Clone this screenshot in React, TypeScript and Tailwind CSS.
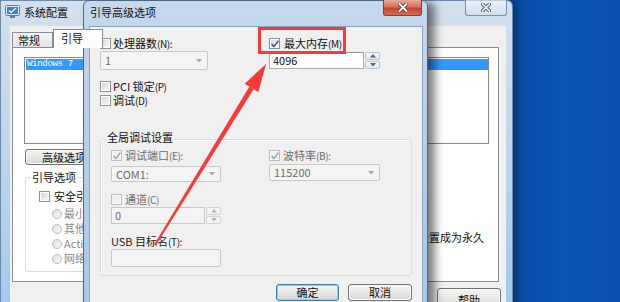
import clsx from "clsx";

const cjk = "font-['Noto_Sans_CJK_SC',sans-serif]";

function Box({ checked, disabled }: { checked?: boolean; disabled?: boolean }) {
  return (
    <span
      className={clsx(
        "relative flex h-[11px] w-[11px] shrink-0 border p-px",
        disabled ? "border-[#bdbdbd] bg-[#f7f7f7]" : "border-[#8e8f8f] bg-white"
      )}
    >
      <span
        className={clsx(
          "block h-full w-full",
          disabled ? "bg-[#f0f0f0]" : "bg-[linear-gradient(135deg,#d6d6d6,#f8f8f8)]"
        )}
      />
      {checked && (
        <svg className="absolute left-0 top-0" width="10" height="10" viewBox="0 0 10 10">
          <path
            d="M1.6 5 L3.9 7.6 L8.4 1.6"
            fill="none"
            stroke={disabled ? "#a3a3a3" : "#3b4f95"}
            strokeWidth="1.5"
          />
        </svg>
      )}
    </span>
  );
}

// "处理器数(N):" -> main text + narrow accelerator part, like the half-width system font
function Label({ text }: { text: string }) {
  const i = text.indexOf("(");
  if (i < 0) return <>{text}</>;
  return (
    <>
      {text.slice(0, i)}
      <span className="text-[10px] tracking-[-0.4px]">{text.slice(i)}</span>
    </>
  );
}

function CheckRow({
  label,
  checked,
  disabled,
  className,
  gap = "gap-[3px]",
}: {
  label: string;
  checked?: boolean;
  disabled?: boolean;
  className?: string;
  gap?: string;
}) {
  return (
    <div className={clsx("flex h-[13px] items-center whitespace-nowrap", gap, className)}>
      <Box checked={checked} disabled={disabled} />
      <span className={clsx("leading-[13px]", disabled ? "text-[#6d6d6d]" : "text-[#111]")}>
        <Label text={label} />
      </span>
    </div>
  );
}

function Radio({ label }: { label: string }) {
  return (
    <div className="flex h-[13px] items-center gap-[2px] whitespace-nowrap">
      <span className="h-[10px] w-[10px] shrink-0 rounded-full border border-[#bcbcbc] bg-[linear-gradient(135deg,#e2e2e2,#f8f8f8)]" />
      <span className="leading-[13px] text-[#8a8a8a]">{label}</span>
    </div>
  );
}

function Down({ color = "#a8a8a8" }: { color?: string }) {
  return (
    <svg width="6" height="4" viewBox="0 0 6 4">
      <path d="M0 0 L6 0 L3 3.5 Z" fill={color} />
    </svg>
  );
}

function Up({ color = "#a8a8a8" }: { color?: string }) {
  return (
    <svg width="6" height="4" viewBox="0 0 6 4">
      <path d="M0 3.5 L6 3.5 L3 0 Z" fill={color} />
    </svg>
  );
}

function Combo({ value, className }: { value: string; className: string }) {
  return (
    <div
      className={clsx(
        "flex items-center rounded-[2px] border border-[#c8c8c8] bg-[#f4f4f4] pl-[4px] pr-[5px] leading-[13px] text-[#6d6d6d]",
        className
      )}
    >
      <span className="flex-1">{value}</span>
      <Down />
    </div>
  );
}

function Spin({ value, disabled, className }: { value: string; disabled?: boolean; className: string }) {
  const arrow = disabled ? "#b4b4b4" : "#4e6286";
  return (
    <div className={clsx("flex gap-px", className)}>
      <div
        className={clsx(
          "flex flex-1 items-center border pl-[3px] leading-[13px]",
          disabled
            ? "border-[#c8c8c8] bg-[#f4f4f4] text-[#6d6d6d]"
            : "border-[#abadb3] border-t-[#8e9097] bg-white text-[#111]"
        )}
      >
        {value}
      </div>
      <div className="flex w-[15px] flex-col gap-px">
        <span
          className={clsx(
            "flex flex-1 items-center justify-center rounded-[2px] border",
            disabled ? "border-[#d2d2d2] bg-[#f4f4f4]" : "border-[#b7c3d3] bg-linear-to-b from-[#f7f9fc] to-[#e3e8ef]"
          )}
        >
          <Up color={arrow} />
        </span>
        <span
          className={clsx(
            "flex flex-1 items-center justify-center rounded-[2px] border",
            disabled ? "border-[#d2d2d2] bg-[#f4f4f4]" : "border-[#b7c3d3] bg-linear-to-b from-[#f7f9fc] to-[#e3e8ef]"
          )}
        >
          <Down color={arrow} />
        </span>
      </div>
    </div>
  );
}

function Btn({ label, main, className }: { label: string; main?: boolean; className: string }) {
  return (
    <div
      className={clsx(
        "flex items-center justify-center rounded-[3px] border bg-linear-to-b from-[#f4f4f4] via-[#e8e8e8] to-[#d6d6d6] leading-[13px] text-[#111]",
        main
          ? "border-[#3c7fb1] shadow-[inset_0_0_0_1px_#7fd6fb]"
          : "border-[#707070] shadow-[inset_0_0_0_1px_#fbfbfb]",
        className
      )}
    >
      {label}
    </div>
  );
}

function CloseX({ color = "#fff" }: { color?: string }) {
  return (
    <svg width="10" height="9" viewBox="0 0 10 9">
      <path d="M1.5 1 L8.5 8 M8.5 1 L1.5 8" stroke="#3b3b3b" strokeWidth="3.4" strokeLinecap="square" />
      <path d="M1.5 1 L8.5 8 M8.5 1 L1.5 8" stroke={color} strokeWidth="1.8" strokeLinecap="square" />
    </svg>
  );
}

function SysConfig() {
  return (
    <div className="absolute left-0 top-0 flex h-[330px] w-[513px] flex-col rounded-tr-[6px] border border-[#6d8aab] bg-[linear-gradient(180deg,#d3e0ee_0%,#c6d9ec_30%,#9fc8ef_100%)] shadow-[4px_0_8px_rgba(0,0,0,0.35)]">
      {/* title bar */}
      <div className="flex h-[25px] items-start">
        <svg className="ml-[4px] mt-[4px]" width="15" height="14" viewBox="0 0 15 14">
          <rect x="0.5" y="0.5" width="14" height="10" rx="1" fill="#dfe8f0" stroke="#6a7c8c" />
          <rect x="2" y="2" width="11" height="7" fill="#3d7fd0" />
          <path d="M4 5.5 L6 7.5 L11 3" fill="none" stroke="#fff" strokeWidth="1.2" />
          <rect x="5" y="11" width="5" height="2" fill="#6a7c8c" />
        </svg>
        <span className="ml-[4px] pt-[5px] text-[11px] leading-[13px] text-[#111]">系统配置</span>
        <div className="-mt-px ml-auto mr-[5px] flex h-[16px] w-[42px] items-center justify-center rounded-b-[3px] border border-t-0 border-[#7a90aa] bg-[linear-gradient(180deg,rgba(255,255,255,0.55),rgba(210,225,240,0.35))]">
          <CloseX color="#e8eef5" />
        </div>
      </div>

      {/* client */}
      <div className="ml-[9px] mr-[6px] flex-1 bg-[#f0f0f0]">
        <div className="flex items-end pl-[2px] pt-[3px]">
          <div className="h-[15px] w-[41px] border border-b-0 border-[#898c95] bg-linear-to-b from-[#f4f4f4] to-[#e4e4e4] pl-[5px] leading-[14px]">
            常规
          </div>
          <div className="relative z-10 -mb-px h-[19px] w-[50px] border border-b-0 border-[#898c95] bg-white pl-[7px] leading-[17px]">
            引导
          </div>
        </div>

        <div className="ml-[2px] h-[235px] w-[487px] border border-[#898c95] bg-white">
          <div className="ml-[11px] mt-[9px] h-[87px] w-[465px] border border-[#828790] bg-white pt-px">
            <div className="ml-px h-[11px] bg-[#3399ff] pl-[1px] font-['Liberation_Mono',monospace] text-[9px] leading-[11px] tracking-[-0.3px] text-white">
              Windows 7
            </div>
          </div>

          <div className="flex">
            <div className="flex flex-col">
              <Btn label="高级选项" className="ml-[12px] mt-[5px] h-[16px] w-[78px]" />
              <div className="relative ml-[12px] mt-[12px] h-[95px] w-[250px] rounded-[3px] border border-[#d5dfe5]">
                <span className="absolute -top-[7px] left-[5px] bg-white px-px leading-[13px]">引导选项</span>
                <CheckRow label="安全引导(F)" className="ml-[13px] mt-[12px]" gap="gap-[4px]" />
                <div className="ml-[26px] mt-[4px] flex flex-col gap-[2px]">
                  <Radio label="最小(I)" />
                  <Radio label="其他外壳(L)" />
                  <Radio label="Active Directory 修复(P)" />
                  <Radio label="网络(N)" />
                </div>
              </div>
            </div>
            <div className="ml-auto mr-[14px] pt-[87px]">
              <div className="flex h-[13px] items-center gap-[4px] leading-[13px]">
                <Box />
                <span>使所有引导设置成为永久</span>
              </div>
            </div>
          </div>
        </div>

        <div className="mt-[6px] flex justify-end pr-[5px]">
          <Btn label="帮助" className="h-[20px] w-[64px] pt-[4px]" />
        </div>
      </div>
    </div>
  );
}

function Advanced() {
  return (
    <div className="absolute left-[83px] top-0 flex h-[330px] w-[345px] flex-col rounded-t-[6px] border border-[#4d6784] bg-[linear-gradient(180deg,#c5d8ec_0%,#b7cee7_40%,#a9c8ea_100%)] shadow-[7px_2px_9px_rgba(0,0,0,0.5)]">
      <div className="flex h-[25px] items-start">
        <span className="pl-[6px] pt-[5px] text-[11px] leading-[13px] text-[#111]">引导高级选项</span>
        <div className="-mt-px ml-auto mr-[5px] flex h-[16px] w-[39px] items-center justify-center rounded-b-[3px] border border-t-0 border-[#8a3b31] bg-[linear-gradient(180deg,#e9a99a_0%,#d4705f_45%,#c5402f_55%,#d86b54_100%)]">
          <CloseX />
        </div>
      </div>

      <div className="ml-[5px] mr-[4px] flex-1 border border-[#8fa4bd] bg-[#f0f0f0]">
        <div className="flex pl-[10px] pt-[10px]">
          <div className="w-[108px]">
            <CheckRow label="处理器数(N):" gap="gap-[2px]" />
            <Combo value="1" className="mt-px h-[19px] w-[108px]" />
            <CheckRow label="PCI 锁定(P)" className="mt-[10px]" gap="gap-[2px]" />
            <CheckRow label="调试(D)" className="mt-px" gap="gap-[2px]" />
          </div>
          <div className="ml-[61px]">
            <CheckRow label="最大内存(M)" checked gap="gap-[4px]" />
            <Spin value="4096" className="mt-[2px] h-[17px] w-[111px]" />
          </div>
        </div>

        <div className="relative ml-[10px] mt-[32px] w-[312px] rounded-[3px] border border-[#d5dfe5] pb-[8px] pl-[10px] pt-[9px] shadow-[inset_1px_1px_0_#fff]">
          <span className="absolute -top-[9px] left-[5px] bg-[#f0f0f0] px-px leading-[13px] text-[#111]">全局调试设置</span>
          <div className="flex">
            <div className="w-[110px]">
              <CheckRow label="调试端口(E):" checked disabled />
              <Combo value="COM1:" className="mt-[4px] h-[16px] w-[110px]" />
            </div>
            <div className="ml-[48px]">
              <CheckRow label="波特率(B):" checked disabled />
              <Combo value="115200" className="mt-[2px] h-[17px] w-[111px]" />
            </div>
          </div>
          <CheckRow label="通道(C)" disabled className="mt-[11px]" />
          <Spin value="0" disabled className="mt-px h-[17px] w-[110px]" />
          <div className="mt-[11px] h-[13px] leading-[13px] text-[#222]">
            <Label text="USB 目标名(T):" />
          </div>
          <div className="mt-px h-[18px] w-[110px] rounded-[2px] border border-[#c8c8c8] bg-[#f4f4f4]" />
        </div>

        <div className="mt-[8px] flex justify-end gap-[9px] pr-[10px]">
          <Btn label="确定" main className="h-[17px] w-[63px]" />
          <Btn label="取消" className="h-[17px] w-[64px]" />
        </div>
      </div>
    </div>
  );
}

export default function App() {
  return (
    <div
      className={clsx(
        "relative h-[302px] w-[620px] overflow-hidden bg-[linear-gradient(90deg,#0a47a0_0%,#0a47a0_80%,#0b55b4_90%,#0a52ad_100%)] text-[11px] text-[#111]",
        cjk
      )}
    >
      <SysConfig />
      <Advanced />

      {/* annotation */}
      <div className="pointer-events-none absolute left-[258px] top-[27px] h-[27px] w-[88px] border-[3px] border-[#f23b3b]" />
      <svg className="pointer-events-none absolute left-0 top-0" width="620" height="302" viewBox="0 0 620 302">
        <polygon points="249.4,86.6 253.6,89.2 155.9,245.5 154.1,244.5" fill="#f43a3a" />
        <polygon points="266,64 258.3,92.1 244.7,83.7" fill="#f43a3a" />
      </svg>
    </div>
  );
}
